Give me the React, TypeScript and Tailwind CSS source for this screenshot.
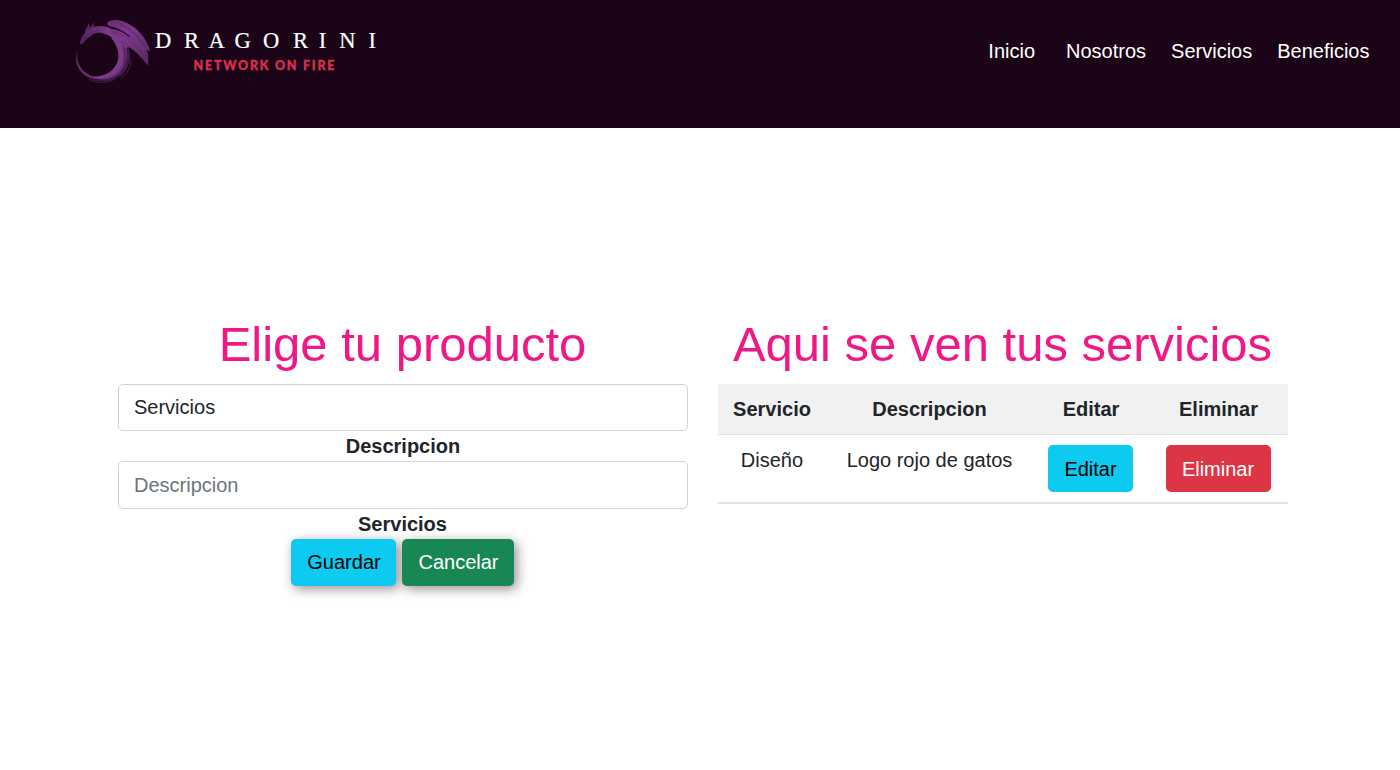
import React from "react";

const navItems = [
  { label: "Inicio", className: "mr-[31px]" },
  { label: "Nosotros", className: "mr-[25px]" },
  { label: "Servicios", className: "mr-[25px]" },
  { label: "Beneficios", className: "" },
];

function Logo() {
  return (
    <svg width="325" height="80" viewBox="0 0 325 80" role="img" aria-label="Dragorini">
      <defs>
        <linearGradient id="neck" gradientUnits="userSpaceOnUse" x1="45" y1="100" x2="170" y2="90">
          <stop offset="0" stopColor="#4f2459" />
          <stop offset="0.35" stopColor="#5d2b68" />
          <stop offset="0.65" stopColor="#7a3887" />
          <stop offset="1" stopColor="#7a3887" />
        </linearGradient>
        <linearGradient id="wing" gradientUnits="userSpaceOnUse" x1="125" y1="40" x2="250" y2="150">
          <stop offset="0" stopColor="#6a3076" />
          <stop offset="0.4" stopColor="#7d398a" />
          <stop offset="1" stopColor="#5c2a67" />
        </linearGradient>
      </defs>
      <g transform="scale(0.33333)">
        <path d="M36 122 C29 156 44 190 76 204 C112 219 146 202 159 172 C172 140 166 110 148 88 L180 92 C200 122 197 164 171 191 C144 217 97 221 65 200 C35 181 26 151 36 122Z" fill="#43194a" />
        <path d="M37 124 C32 156 48 184 77 197 C110 211 143 197 156 168 C168 140 160 108 138 84 L164 78 C190 108 193 145 174 176 C150 212 99 216 66 199 C39 182 28 153 37 124Z" fill="#64306f" />
        <path d="M156 84 C180 115 183 156 158 184 C137 208 101 212 70 198 C108 206 148 187 158 154 C165 130 156 104 140 84Z" fill="#7d398a" />
        <path d="M46 102 C44 91 51 78 60 68 C60 58 68 52 71 38 L74 54 C80 49 86 43 89 34 L86 51 C107 44 128 49 147 60 C178 76 194 98 192 112 L168 116 C157 91 136 75 110 69 C92 67 84 72 76 80 C64 83 61 94 52 102Z" fill="url(#neck)" />
        <path d="M61 73 C78 56 101 52 124 58" fill="none" stroke="#713480" strokeWidth="3" />
        <path d="M126 39 C135 27 162 27 184 38 C219 53 245 86 256 124 C251 123 248 121 245 120 C250 132 251 150 249 167 C237 154 226 139 212 126 C198 114 184 106 170 98 C157 88 147 73 133 66 L138 56 C151 57 163 61 172 66 C158 54 138 51 130 47Z" fill="url(#wing)" />
        <path d="M134 51 C154 53 176 65 194 80" fill="none" stroke="#1b0417" strokeWidth="3.5" />
        <path d="M142 36 C184 38 218 72 246 119 M164 45 C196 55 221 81 241 111" fill="none" stroke="#502359" strokeWidth="2.5" opacity=".55" />
        <path d="M142 65 C183 74 212 104 242 144 M168 94 C198 108 225 134 246 159" fill="none" stroke="#52245b" strokeWidth="2.5" opacity=".5" />
        <path d="M188 110 C201 145 188 180 164 199 M167 206 C184 194 198 174 198 149 M72 208 C99 222 128 218 148 208" fill="none" stroke="#4f2459" strokeWidth="2.5" />
        <path d="M174 105 C188 145 180 178 155 199" fill="none" stroke="#45204d" strokeWidth="2.5" />
      </g>
      <text x="90 119 143.5 169.5 198 228 253.7 274.2 303.5" y="37.8" fontSize="22.5" fill="#fff" stroke="#fff" strokeWidth="0.2" fontFamily="'Liberation Serif', serif">DRAGORINI</text>
      <text x="128.5" y="60" fontSize="12.5" fontWeight="900" textLength="141" fill="#d9304f" stroke="#d9304f" strokeWidth="0.35" fontFamily="Lato, sans-serif">NETWORK ON FIRE</text>
    </svg>
  );
}

const button = "inline-flex h-[47px] items-center justify-center rounded-[5px]";
const input =
  "block w-full rounded-[5px] border border-[#ced4da] bg-white px-[15px] text-[#212529] outline-none placeholder:text-[#6c757d]";
const glow = "pb-px shadow-[3px_3px_12px_rgba(27,4,23,0.45)]";
const heading = "mb-[10px] h-[59px] whitespace-nowrap pr-px text-[49px] leading-[59px] text-[#f01884]";

export default function App() {
  return (
    <div className="h-[770px] overflow-hidden bg-white font-['Liberation_Sans',Arial,sans-serif] text-[20px] leading-[30px] text-[#212529]">
      <header className="flex h-32 items-start justify-between bg-[#1b0417] pl-[65px] pr-[30.5px] pt-[10px]">
        <Logo />
        <nav className="flex pt-[26px] text-white">
          {navItems.map((item) => (
            <a key={item.label} href="#" className={item.className}>
              {item.label}
            </a>
          ))}
        </nav>
      </header>
      <main className="flex gap-[30px] pl-[118px] pt-[187px]">
        <section className="w-[570px] text-center">
          <h1 className={heading}>Elige tu producto</h1>
          <input className={`${input} h-[47px]`} defaultValue="Servicios" />
          <label className="block h-[30px] font-bold">Descripcion</label>
          <input className={`${input} h-[48px]`} placeholder="Descripcion" />
          <label className="block h-[30px] pr-px font-bold">Servicios</label>
          <div className="flex justify-center gap-[6px] pr-px">
            <button className={`${button} ${glow} w-[105px] bg-[#0dcaf0] pl-px text-black`}>Guardar</button>
            <button className={`${button} ${glow} w-[112px] bg-[#198754] pl-px text-white`}>Cancelar</button>
          </div>
        </section>
        <section className="w-[570px] text-center">
          <h1 className={heading}>Aqui se ven tus servicios</h1>
          <table className="w-full table-fixed border-separate border-spacing-0">
            <colgroup>
              <col className="w-[108px]" />
              <col className="w-[207px]" />
              <col className="w-[116px]" />
              <col className="w-[139px]" />
            </colgroup>
            <thead>
              <tr className="h-[51px] bg-[#f1f1f1] *:border-b *:border-[#dee2e6]">
                <th>Servicio</th>
                <th>Descripcion</th>
                <th>Editar</th>
                <th>Eliminar</th>
              </tr>
            </thead>
            <tbody>
              <tr className="h-[69px] align-top *:border-b-2 *:border-[#dee2e6] *:pt-[10px]">
                <td>Diseño</td>
                <td>Logo rojo de gatos</td>
                <td className="pr-px">
                  <button className={`${button} w-[85px] bg-[#0dcaf0] text-black`}>Editar</button>
                </td>
                <td>
                  <button className={`${button} w-[105px] bg-[#dc3545] pr-px text-white`}>Eliminar</button>
                </td>
              </tr>
            </tbody>
          </table>
        </section>
      </main>
    </div>
  );
}
